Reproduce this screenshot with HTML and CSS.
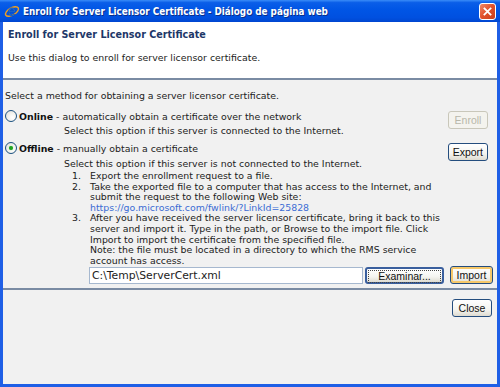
FILE: index.html
```html
<!DOCTYPE html>
<html lang="en">
<head>
	<meta charset="UTF-8">
	<title>Enroll for Server Licensor Certificate</title>
	<link rel="stylesheet" href="styles.css">
</head>
<body>
	<div class="window">
		<div class="titlebar">
			<svg class="ie-icon" width="16" height="16" viewBox="0 0 16 16">
				<ellipse cx="8" cy="8.5" rx="7.2" ry="3.6" transform="rotate(-30 8 8.5)" fill="none" stroke="#f0a020" stroke-width="1.4"/>
				<path d="M4.5 9h7.2c0-2.6-1.6-4.3-3.7-4.3S4.2 6.5 4.2 9s1.7 4.2 3.9 4.2c1.5 0 2.7-.7 3.3-1.9H9.2c-.3.4-.7.6-1.2.6-1 0-1.8-.8-1.9-1.9M6.2 7.8c.1-.9.8-1.6 1.8-1.6s1.6.7 1.7 1.6z" fill="#1f6fd8" stroke="#0b3f9e" stroke-width=".4"/>
			</svg>
			<span class="title-text">Enroll for Server Licensor Certificate - Diálogo de página web</span>
			<span class="close-x">
				<svg width="17" height="17" viewBox="0 0 17 17">
					<path d="M5 5l7 7M12 5l-7 7" stroke="#fff" stroke-width="2" stroke-linecap="square"/>
				</svg>
			</span>
		</div>
		<div class="header">
			<div class="header-title">Enroll for Server Licensor Certificate</div>
			<div class="header-sub">Use this dialog to enroll for server licensor certificate.</div>
		</div>
		<div class="content">
			<div class="intro">Select a method for obtaining a server licensor certificate.</div>

			<div class="option online">
				<div class="option-main">
					<div class="option-head">
						<span class="radio"></span>
						<b>Online</b>&nbsp;- automatically obtain a certificate over the network
					</div>
					<div class="option-desc">Select this option if this server is connected to the Internet.</div>
				</div>
				<button class="btn disabled">Enroll</button>
			</div>

			<div class="option offline">
				<div class="option-main">
					<div class="option-head">
						<span class="radio checked"></span>
						<b>Offline</b>&nbsp;- manually obtain a certificate
					</div>
					<div class="option-desc">Select this option if this server is not connected to the Internet.</div>
					<ol class="steps">
						<li>Export the enrollment request to a file.</li>
						<li>Take the exported file to a computer that has access to the Internet, and submit the request to the following Web site:<br><a href="#">https://go.microsoft.com/fwlink/?LinkId=25828</a></li>
						<li>After you have received the server licensor certificate, bring it back to this server and import it. Type in the path, or Browse to the import file. Click Import to import the certificate from the specified file.<br>Note: the file must be located in a directory to which the RMS service account has access.</li>
					</ol>
				</div>
				<button class="btn">Export</button>
			</div>

			<div class="file-row">
				<input class="file-path" type="text" value="C:\Temp\ServerCert.xml">
				<button class="btn browse"><span>Examinar...</span></button>
				<button class="btn default">Import</button>
			</div>
		</div>
		<div class="footer">
			<button class="btn">Close</button>
		</div>
	</div>
</body>
</html>
```

FILE: styles.css
```css
*{
	margin: 0;
	padding: 0;
	box-sizing: border-box;
}
html, body{
	width: 500px;
	height: 387px;
	overflow: hidden;
}
body{
	font-family: "DejaVu Sans", Verdana, sans-serif;
	font-size: 9.4px;
	color: #222;
	background: #f1f1f1;
}
.window{
	width: 500px;
	height: 387px;
	display: flex;
	flex-direction: column;
	background: #f1f1f1;
	border: 3px solid #1f5fe6;
	border-top: 0;
}
/* title bar */
.titlebar{
	height: 22px;
	margin: 0 -3px;
	display: flex;
	align-items: center;
	padding: 0 3px 0 4px;
	background: linear-gradient(#3a8cf8 0%, #0a5ee8 12%, #0055e5 45%, #0050e0 80%, #0046d0 100%);
	flex-shrink: 0;
}
.ie-icon{
	flex-shrink: 0;
}
.title-text{
	margin-left: 3px;
	color: #fff;
	font-family: "DejaVu Sans Condensed", "DejaVu Sans", sans-serif;
	font-weight: bold;
	font-size: 9.8px;
	text-shadow: 1px 1px 0 #0a2f8a;
	flex: 1;
	white-space: nowrap;
}
.close-x{
	width: 17px;
	height: 17px;
	border: 1px solid #fff;
	border-radius: 3px;
	background: linear-gradient(135deg, #f08868 0%, #e0502a 50%, #c8401c 100%);
	display: flex;
	align-items: center;
	justify-content: center;
	margin-right: 1px;
}
.close-x svg{
	width: 15px;
	height: 15px;
}
/* header */
.header{
	background: #fff;
	height: 58px;
	padding: 7px 5px 0 5px;
	border-bottom: 2px solid #7a8ba3;
	flex-shrink: 0;
}
.header-title{
	font-weight: bold;
	font-size: 9.6px;
	color: #1d3768;
	line-height: 11px;
}
.header-sub{
	margin-top: 12px;
	line-height: 11px;
}
/* content */
.content{
	padding: 10px 2px 0 2px;
	border-bottom: 2px solid #7a8ba3;
}
.intro{
	line-height: 11px;
}
.option{
	display: flex;
	align-items: flex-start;
	justify-content: space-between;
}
.online{
	margin-top: 9px;
}
.offline{
	margin-top: 6px;
}
.option-head{
	display: flex;
	align-items: center;
	line-height: 11px;
	white-space: nowrap;
}
.option-head b{
	margin-left: 2px;
	color: #111;
}
.option-desc{
	margin-left: 59px;
	margin-top: 3px;
	line-height: 11px;
}
.offline .option-desc{
	margin-top: 4px;
}
.radio{
	width: 12px;
	height: 12px;
	border-radius: 50%;
	border: 1px solid #1c5180;
	background: radial-gradient(circle at 65% 65%, #fff 0, #f4f4f0 40%, #dcdcd6 100%);
	display: inline-flex;
	align-items: center;
	justify-content: center;
}
.radio.checked::after{
	content: "";
	width: 4px;
	height: 4px;
	border-radius: 50%;
	background: #21a121;
	box-shadow: 0 0 1px #5fd05f;
}
.steps{
	margin-left: 85px;
	margin-top: 2px;
	line-height: 10.6px;
	padding-left: 0;
	list-style: none;
	counter-reset: step;
	width: 356px;
}
.steps li{
	position: relative;
	counter-increment: step;
}
.steps li::before{
	content: counter(step) ".";
	position: absolute;
	left: -18px;
}
.steps a{
	color: #3b6cd4;
	text-decoration: none;
}
/* buttons */
.btn{
	font-family: "Liberation Sans", Arial, sans-serif;
	font-size: 10.5px;
	color: #111;
	height: 18px;
	min-width: 40px;
	padding: 0 4px;
	border: 1px solid #244d7e;
	border-radius: 3px;
	background: linear-gradient(#ffffff 0%, #f4f4f0 60%, #dedbd0 100%);
}
.btn.disabled{
	color: #b8b7aa;
	border-color: #c9c7ba;
	background: #f4f3ee;
}
.option .btn{
	margin: 1px 7px 0 0;
	flex-shrink: 0;
}
.file-row{
	display: flex;
	align-items: center;
	padding: 0 0 4px 84px;
	margin-top: 0;
}
.file-path{
	width: 274px;
	height: 17px;
	border: 1px solid #a6b8cf;
	font-family: "DejaVu Sans", Verdana, sans-serif;
	font-size: 10.8px;
	color: #222;
	padding: 0 2px;
	background: #fff;
}
.btn.browse{
	margin-left: 2px;
	width: 79px;
	height: 17px;
	padding: 1px;
	border-color: #3a5f9e;
	border-width: 2px;
}
.btn.browse span{
	display: block;
	border: 1px dotted #444;
	line-height: 11px;
}
.btn.default{
	margin-left: 6px;
	width: 43px;
	border: 1px solid #244d7e;
	box-shadow: inset 0 0 0 2px #f6c86a;
}
.footer{
	display: flex;
	justify-content: flex-end;
	padding: 9px 5px 0 0;
	flex: 1;
}
.footer .btn{
	width: 39px;
}
```
